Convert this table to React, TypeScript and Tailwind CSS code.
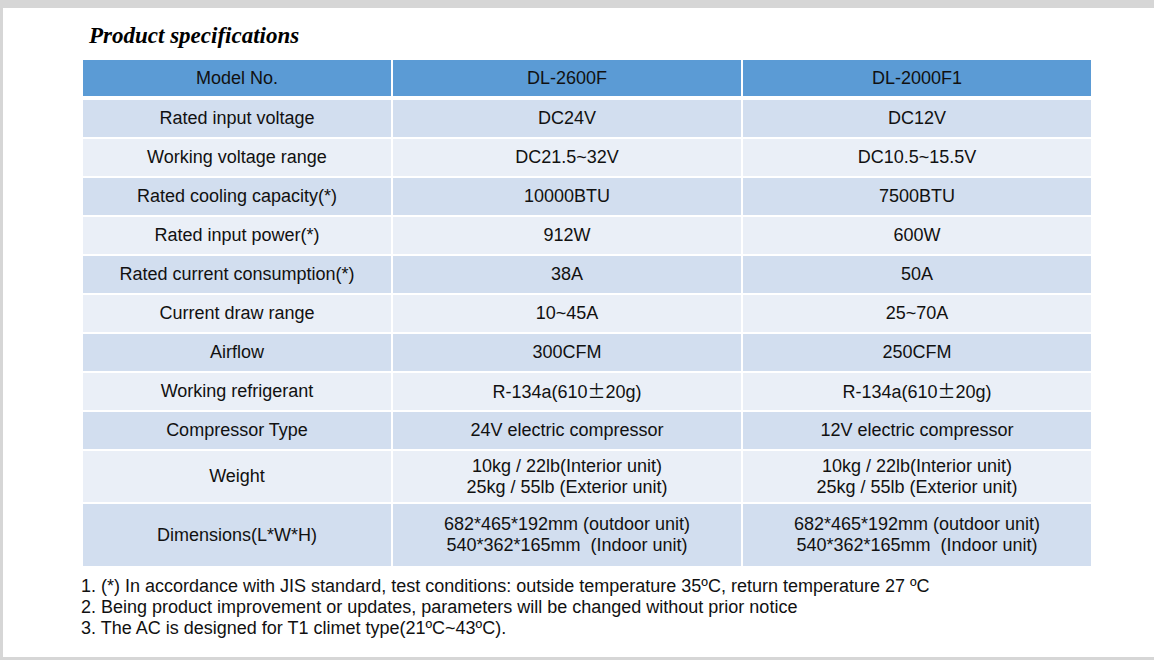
import React from "react";

const PM = (
  <span className="font-['Noto_Sans_CJK_SC',sans-serif]">±</span>
);

type Line = React.ReactNode;

const rows: { label: string; a: Line[]; b: Line[]; h: string }[] = [
  { label: "Rated input voltage", a: ["DC24V"], b: ["DC12V"], h: "h-[37px]" },
  { label: "Working voltage range", a: ["DC21.5~32V"], b: ["DC10.5~15.5V"], h: "h-[37px]" },
  { label: "Rated cooling capacity(*)", a: ["10000BTU"], b: ["7500BTU"], h: "h-[37px]" },
  { label: "Rated input power(*)", a: ["912W"], b: ["600W"], h: "h-[37px]" },
  { label: "Rated current consumption(*)", a: ["38A"], b: ["50A"], h: "h-[37px]" },
  { label: "Current draw range", a: ["10~45A"], b: ["25~70A"], h: "h-[37px]" },
  { label: "Airflow", a: ["300CFM"], b: ["250CFM"], h: "h-[37px]" },
  {
    label: "Working refrigerant",
    a: [<>R-134a(610{PM}20g)</>],
    b: [<>R-134a(610{PM}20g)</>],
    h: "h-[37px]",
  },
  { label: "Compressor Type", a: ["24V electric compressor"], b: ["12V electric compressor"], h: "h-[37px]" },
  {
    label: "Weight",
    a: ["10kg / 22lb(Interior unit)", "25kg / 55lb (Exterior unit)"],
    b: ["10kg / 22lb(Interior unit)", "25kg / 55lb (Exterior unit)"],
    h: "h-[51px]",
  },
  {
    label: "Dimensions(L*W*H)",
    a: ["682*465*192mm (outdoor unit)", "540*362*165mm\u00a0\u00a0(Indoor unit)"],
    b: ["682*465*192mm (outdoor unit)", "540*362*165mm\u00a0\u00a0(Indoor unit)"],
    h: "h-[62px]",
  },
];

function Cell({ lines, bg, h }: { lines: Line[]; bg: string; h: string }) {
  return (
    <div className={`${bg} ${h} flex flex-col items-center justify-center text-center leading-[21px]`}>
      {lines.map((l, i) => (
        <span key={i} className="whitespace-pre">
          {l}
        </span>
      ))}
    </div>
  );
}

export default function App() {
  return (
    <div className="w-[1154px] h-[660px] bg-[#d6d6d6] flex flex-col pt-[8px] pl-[3px] pb-[3px] overflow-hidden">
      <div className="flex-1 bg-white flex flex-col font-['Liberation_Sans',Arial,sans-serif] text-[18px] text-[#111]">
        <div className="pl-[86px] pt-[13px] h-[52px] font-['Liberation_Serif','Times_New_Roman',serif] font-bold italic text-[23px] leading-[29px] text-black">
          Product specifications
        </div>
        <div className="ml-[80px] w-[1008px]">
          <div className="grid grid-cols-[308px_348px_348px] gap-x-[2px] mb-[4px]">
            <Cell lines={["Model No."]} bg="bg-[#5b9bd5]" h="h-[36px]" />
            <Cell lines={["DL-2600F"]} bg="bg-[#5b9bd5]" h="h-[36px]" />
            <Cell lines={["DL-2000F1"]} bg="bg-[#5b9bd5]" h="h-[36px]" />
          </div>
          <div className="grid grid-cols-[308px_348px_348px] gap-x-[2px] gap-y-[2px]">
            {rows.map((r, i) => {
              const bg = i % 2 === 0 ? "bg-[#d2deef]" : "bg-[#eaeff7]";
              return (
                <React.Fragment key={r.label}>
                  <Cell lines={[r.label]} bg={bg} h={r.h} />
                  <Cell lines={r.a} bg={bg} h={r.h} />
                  <Cell lines={r.b} bg={bg} h={r.h} />
                </React.Fragment>
              );
            })}
          </div>
        </div>
        <div className="ml-[78px] mt-[10px] leading-[21px]">
          <div>1. (*) In accordance with JIS standard, test conditions: outside temperature 35ºC, return temperature 27 ºC</div>
          <div>2. Being product improvement or updates, parameters will be changed without prior notice</div>
          <div>3. The AC is designed for T1 climet type(21ºC~43ºC).</div>
        </div>
      </div>
    </div>
  );
}
